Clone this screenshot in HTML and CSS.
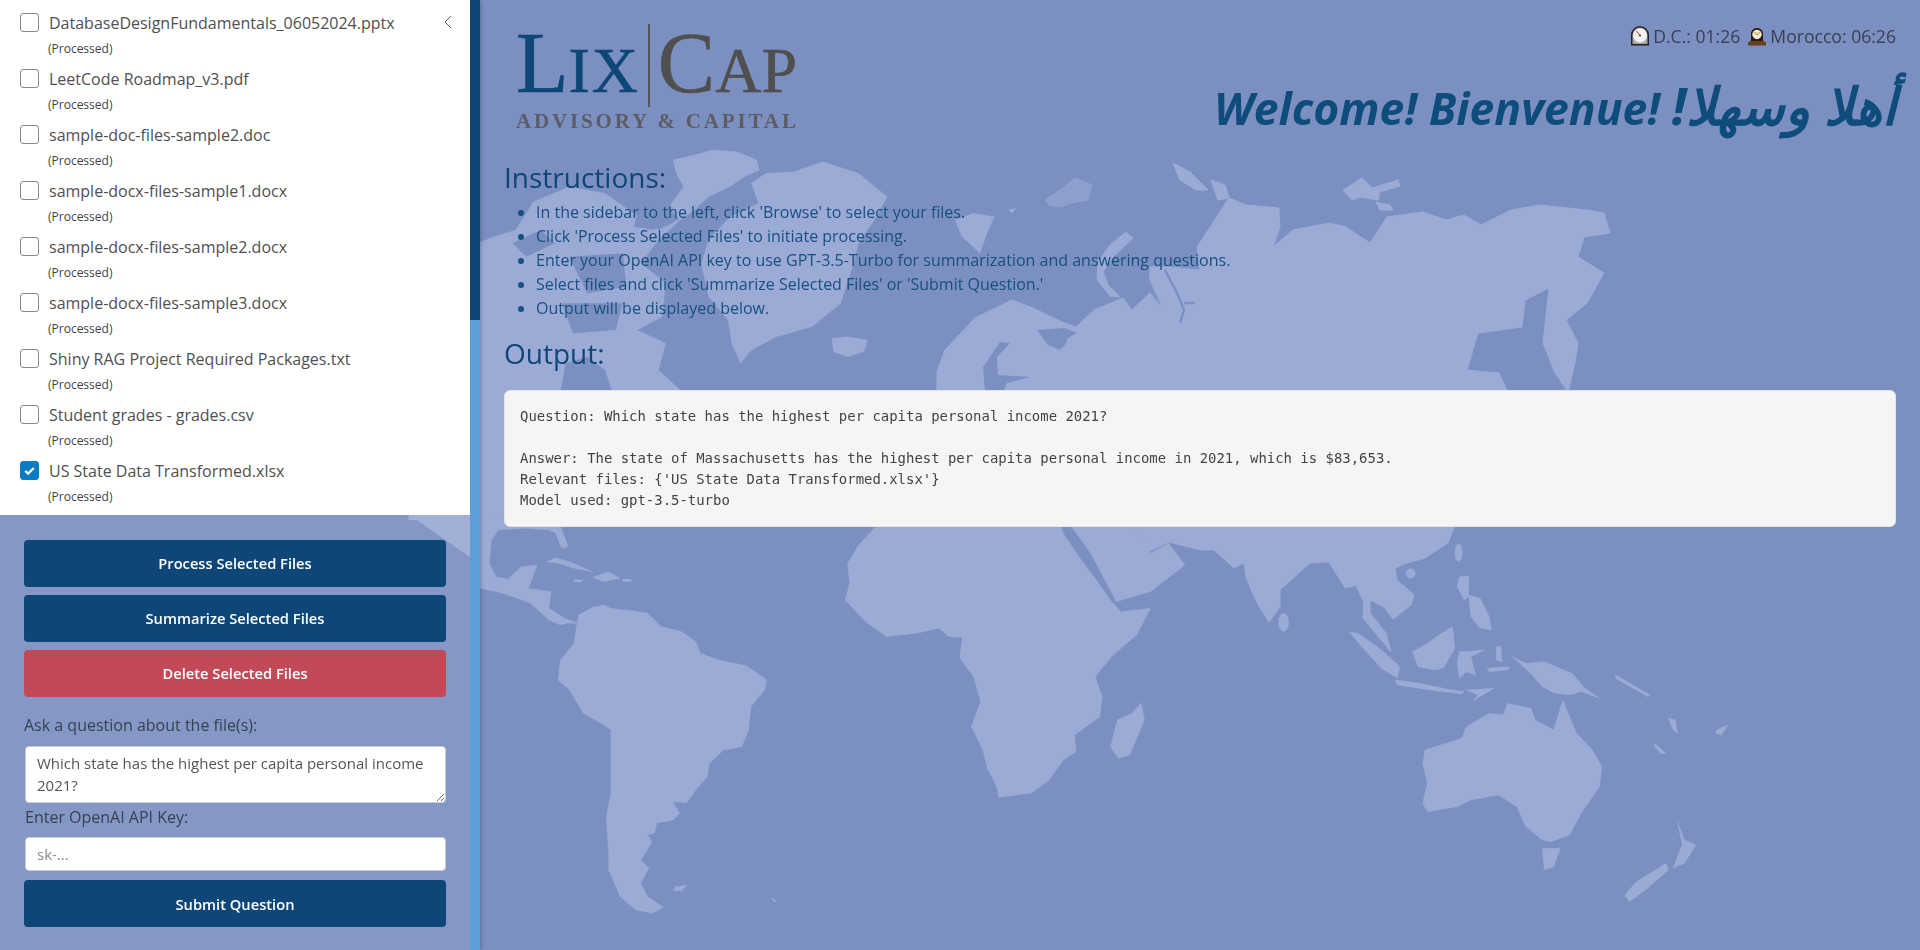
FILE: index.html

```html
<!DOCTYPE html>
<html lang="en">
<head>
    <meta charset="UTF-8">
    <meta name="viewport" content="width=device-width, initial-scale=1.0">
    <title>LixCap Advisory &amp; Capital</title>
    <link rel="stylesheet" href="styles.css">
</head>
<body>

<!-- world map behind the whole page -->
<svg class="world-map" viewBox="0 0 1920 950" aria-hidden="true">
    <g class="land">
        <!-- arctic islands and greenland -->
        <g transform="translate(480 130) scale(.3571 .3333)">
            <path d="M-200 420L40 320L100 300L150 215L250 170L350 190L430 250L500 300L540 280L590 240L500 330L450 400L520 460L510 560L440 600L520 640L500 720L560 780L620 800L620 1170L-200 1170Z"/>
            <path d="M540 90L600 75L650 60L720 65L775 90L782 120L740 140L700 170L640 200L600 240L560 270L530 230L570 170L550 130Z"/>
            <path d="M800 130L880 125L960 95L1060 130L1140 200L1110 260L1060 340L1040 420L1010 520L930 590L830 620L760 660L730 700L705 640L695 570L640 500L620 400L640 330L700 260L780 220L760 160Z"/>
            <path d="M985 625L1030 620L1085 630L1075 665L1030 680L990 665Z"/>
            <path d="M1330 270L1380 250L1440 260L1420 310L1400 370L1350 320Z"/>
            <path d="M1480 240L1500 235L1490 250Z"/>
        </g>
        <!-- eurasia -->
        <path d="M937 392L937 372L945 350L975 318L1012 300L1033 308L1062 322L1076 327L1094 310L1123 298L1132 310L1150 293L1163 309L1150 280L1150 267L1170 267L1200 270L1197 247L1229 198L1246 205L1279 208L1280 227L1273 247L1293 230L1329 223L1346 227L1370 243L1387 217L1423 212L1446 220L1464 215L1481 225L1511 210L1540 205L1587 210L1604 213L1610 233L1584 237L1578 257L1604 273L1587 303L1566 320L1578 343L1575 363L1568 392L1555 373L1543 343L1549 288L1525 300L1522 327L1478 333L1467 370L1499 373L1508 392L1500 400L1457 520L1448 543L1425 558L1407 563L1395 568L1397 580L1414 595L1411 605L1393 619L1384 607L1370 600L1370 613L1386 633L1391 652L1363 618L1364 603L1356 585L1345 588L1342 583L1329 562L1310 563L1280 590L1280 607L1269 622L1257 603L1246 577L1244 563L1234 568L1214 550L1200 550L1169 542L1146 553L1132 530L1100 500L1000 470Z"/>
        <path d="M1126 232L1133 238L1112 258L1103 272L1108 285L1120 297L1110 296L1097 280L1098 262L1110 245Z"/>
        <path d="M1173 163L1190 172L1208 190L1196 190L1180 180Z"/>
        <path d="M1211 180L1225 185L1229 198L1218 200Z"/>
        <path d="M1343 190L1362 178L1372 188L1398 180L1400 186L1380 192L1378 200L1360 197L1352 200Z"/>
        <path d="M1376 202L1390 205L1393 210L1380 210Z"/>
        <path class="faint" d="M1045 200L1060 190L1075 178L1092 185L1088 200L1072 203L1060 207L1050 206Z"/>
        <!-- africa and south america -->
        <g transform="translate(480 520) scale(.4592 .3333)">
            <path d="M-152 -15L170 0L192 80L178 85L165 40L150 30L100 25L40 30L25 60L20 130L35 170L60 178L90 140L125 135L105 205L155 215L150 265L185 295L215 310L190 310L175 315L150 300L110 250L50 220L0 205L-22 111Z"/>
            <path d="M215 285L245 262L270 255L285 265L330 272L365 280L395 320L440 335L470 365L480 400L520 420L580 437L625 480L620 510L590 560L585 630L570 680L530 690L500 730L495 770L470 810L450 848L420 845L435 880L420 900L385 910L380 940L365 945L375 965L360 1000L350 1020L368 1045L350 1090L365 1130L400 1162L375 1180L340 1170L305 1130L280 1050L280 1000L275 890L285 820L285 630L270 615L225 580L195 510L170 480L175 420L205 370L210 320Z"/>
            <path d="M865 15L825 75L800 130L805 190L795 240L840 305L885 350L950 340L1000 325L1020 350L1050 352L1045 415L1075 470L1090 545L1070 620L1095 690L1105 745L1125 800L1130 832L1200 820L1240 780L1270 720L1298 695L1295 645L1350 590L1355 530L1340 470L1375 410L1430 345L1460 265L1395 275L1380 250L1340 175L1305 110L1270 40L1265 15Z"/>
            <path d="M1285 15L1330 100L1385 245L1460 215L1535 135L1500 70L1460 100L1420 15Z"/>
            <path d="M1440 548L1447 600L1415 705L1390 715L1373 680L1388 600L1420 580Z"/>
            <path d="M145 125L165 113L200 128L245 155L205 145L170 130Z"/>
            <path d="M245 172L280 155L305 175L270 185Z"/>
            <path d="M205 178L225 180L220 187L205 185Z"/>
            <path d="M310 178L330 178L328 185L312 184Z"/>
            <path d="M425 1100L450 1096L440 1112L422 1112Z"/>
            <path d="M635 1133L645 1142L640 1146Z"/>
        </g>
        <!-- south east asia and oceania -->
        <g transform="translate(1200 520) scale(.4592 .3333)">
            <ellipse cx="182" cy="307" rx="11" ry="27"/>
            <ellipse cx="459" cy="160" rx="10" ry="14"/>
            <ellipse cx="563" cy="98" rx="8" ry="26"/>
            <path d="M565 170L585 168L585 230L575 240L560 200Z"/>
            <path d="M585 225L610 235L630 290L635 330L610 325L590 290Z"/>
            <path d="M325 335L345 340L400 395L435 440L430 475L395 445L355 385Z"/>
            <path d="M425 480L480 490L530 505L575 515L570 522L500 510L430 495Z"/>
            <path d="M580 510L640 505L610 530L595 542L605 525Z"/>
            <path d="M550 320L555 385L530 445L510 450L475 440L462 395L490 375L520 345Z"/>
            <path d="M565 395L620 390L590 410L600 465L580 455L565 475L560 430Z"/>
            <path d="M625 445L675 440L670 450L630 455Z"/>
            <path d="M645 380L655 378L658 425L645 420Z"/>
            <path d="M680 410L710 430L750 425L810 460L835 500L870 535L830 515L805 525L770 518L745 500L720 460Z"/>
            <path d="M490 690L570 655L580 620L630 580L660 585L670 550L720 565L730 600L770 630L790 540L820 640L855 690L875 740L870 800L830 880L805 945L765 965L745 960L710 920L690 860L650 825L590 840L560 860L495 875L485 850L495 790L485 730Z"/>
            <path d="M745 985L785 985L770 1040L750 1050Z"/>
            <path d="M1040 905L1055 960L1080 975L1055 1030L1030 1045L1050 975Z"/>
            <path d="M1015 1030L1020 1050L970 1110L935 1145L925 1125L950 1085Z"/>
            <path d="M905 465L980 525L975 530L905 475Z"/>
            <path d="M990 670L1015 700L1005 702L990 680Z"/>
            <path d="M1125 630L1150 615L1135 645L1122 640Z"/>
            <path d="M1020 595L1035 600L1040 640L1030 630Z"/>
        </g>
    </g>
    <g class="sea">
        <!-- baltic and white sea -->
        <path d="M1000 342L1010 343L997 357L998 375L1030 377L1007 383L1003 392L985 392L983 367Z"/>
        <path d="M1077 333L1065 328L1037 330L1048 345L1060 350L1065 345L1068 338Z"/>
        <path class="river" d="M1165 270L1177 293L1184 310L1180 323M1184 303L1195 303"/>
        <!-- canadian arctic channels -->
        <g transform="translate(480 130) scale(.3571 .3333)">
            <path d="M250 380L400 370L410 470L300 490Z"/>
            <path d="M230 520L400 520L380 600L260 610Z"/>
            <path d="M450 220L520 230L490 300L430 290Z"/>
            <path d="M225 785L240 700L300 680L350 720L370 785Z"/>
            <path d="M90 340L170 300L210 340L130 380Z"/>
        </g>
        <!-- red sea -->
        <g transform="translate(480 520) scale(.4592 .3333)">
            <path d="M1270 30L1295 60L1340 130L1385 245L1378 250L1340 175L1305 110Z"/>
        </g>
    </g>
</svg>

<div class="layout">
    <aside class="sidebar">
        <div class="sidebar-body">
            <div class="file-panel">
                <div class="file-row">
                    <span class="check"></span>
                    <span class="file-name">DatabaseDesignFundamentals_06052024.pptx</span>
                    <small class="file-status">(Processed)</small>
                </div>
                <div class="file-row">
                    <span class="check"></span>
                    <span class="file-name">LeetCode Roadmap_v3.pdf</span>
                    <small class="file-status">(Processed)</small>
                </div>
                <div class="file-row">
                    <span class="check"></span>
                    <span class="file-name">sample-doc-files-sample2.doc</span>
                    <small class="file-status">(Processed)</small>
                </div>
                <div class="file-row">
                    <span class="check"></span>
                    <span class="file-name">sample-docx-files-sample1.docx</span>
                    <small class="file-status">(Processed)</small>
                </div>
                <div class="file-row">
                    <span class="check"></span>
                    <span class="file-name">sample-docx-files-sample2.docx</span>
                    <small class="file-status">(Processed)</small>
                </div>
                <div class="file-row">
                    <span class="check"></span>
                    <span class="file-name">sample-docx-files-sample3.docx</span>
                    <small class="file-status">(Processed)</small>
                </div>
                <div class="file-row">
                    <span class="check"></span>
                    <span class="file-name">Shiny RAG Project Required Packages.txt</span>
                    <small class="file-status">(Processed)</small>
                </div>
                <div class="file-row">
                    <span class="check"></span>
                    <span class="file-name">Student grades - grades.csv</span>
                    <small class="file-status">(Processed)</small>
                </div>
                <div class="file-row">
                    <span class="check checked">
                        <svg viewBox="0 0 20 20"><path d="M5 10.5l3.4 3.2L15 7" fill="none" stroke="#fff" stroke-width="2.6"/></svg>
                    </span>
                    <span class="file-name">US State Data Transformed.xlsx</span>
                    <small class="file-status">(Processed)</small>
                </div>
                <svg class="collapse-icon" viewBox="0 0 8 14"><path d="M7 1L1 7l6 6" fill="none" stroke="#555" stroke-width="1"/></svg>
            </div>

            <div class="controls">
                <button class="btn">Process Selected Files</button>
                <button class="btn">Summarize Selected Files</button>
                <button class="btn btn-danger">Delete Selected Files</button>

                <label class="ask-label" for="question">Ask a question about the file(s):</label>
                <textarea id="question" class="field question-field">Which state has the highest per capita personal income 2021?</textarea>
                <label class="key-label" for="api-key">Enter OpenAI API Key:</label>
                <input id="api-key" class="field key-field" type="text" placeholder="sk-...">
                <button class="btn btn-submit">Submit Question</button>
            </div>
        </div>
        <div class="scrollbar"><div class="scrollbar-thumb"></div></div>
    </aside>

    <main class="main">
        <header class="page-header">
            <div class="logo">
                <div class="logo-name">
                    <span class="logo-lix"><span class="logo-big">L</span>IX</span>
                    <span class="logo-rule"></span>
                    <span class="logo-cap"><span class="logo-big">C</span>AP</span>
                </div>
                <div class="logo-sub">ADVISORY &amp; CAPITAL</div>
            </div>
            <div class="greeting">
                <div class="clocks">
                    <svg class="clock" viewBox="0 0 20 20">
                        <path d="M1 19.5V9a9 9 0 0 1 18 0v10.5z" fill="#222"/>
                        <path d="M2.5 18V9a7.500 7.500 0 0 1 15 0v9z" fill="#aaa"/>
                        <circle cx="10" cy="9.500" r="7" fill="#f4f4f4"/>
                        <path d="M6 4.500l4 5" stroke="#d33" stroke-width="1"/>
                        <circle cx="10" cy="9.500" r="1" fill="#333"/>
                    </svg>
                    <span class="clock-text">D.C.: 01:26</span>
                    <svg class="clock clock-mantel" viewBox="0 0 20 20">
                        <path d="M1 19.500v-3l3-2V8a6 6 0 0 1 12 0v6.500l3 2v3z" fill="#6b3f1d"/>
                        <path d="M4 15V8a6 6 0 0 1 12 0v7z" fill="#2a1a10"/>
                        <circle cx="10" cy="8.500" r="4.700" fill="#f3ead8"/>
                        <path d="M7.500 6l2.500 3 2.500-3" fill="none" stroke="#b8860b" stroke-width="1"/>
                    </svg>
                    <span class="clock-text">Morocco: 06:26</span>
                </div>
                <h1 class="welcome">Welcome! Bienvenue! <span class="welcome-ar">!أهلا وسهلا</span></h1>
            </div>
        </header>

        <h3 class="section-title">Instructions:</h3>
        <ul class="steps">
            <li>In the sidebar to the left, click 'Browse' to select your files.</li>
            <li>Click 'Process Selected Files' to initiate processing.</li>
            <li>Enter your OpenAI API key to use GPT-3.5-Turbo for summarization and answering questions.</li>
            <li>Select files and click 'Summarize Selected Files' or 'Submit Question.'</li>
            <li>Output will be displayed below.</li>
        </ul>

        <h3 class="section-title output-title">Output:</h3>
        <pre class="output">Question: Which state has the highest per capita personal income 2021?

Answer: The state of Massachusetts has the highest per capita personal income in 2021, which is $83,653.
Relevant files: {'US State Data Transformed.xlsx'}
Model used: gpt-3.5-turbo</pre>
    </main>
</div>

</body>
</html>
```

FILE: styles.css

```css
html, body { margin: 0; padding: 0; height: 100%; overflow: hidden; }
body { background-color: #7b90c1; color: #3a4054; font-family: "Open Sans", "DejaVu Sans", sans-serif; font-size: 16px; line-height: 24px; }

.world-map { position: fixed; top: 0; left: 0; width: 1920px; height: 950px; }
.land { fill: #9babd6; stroke: #9babd6; stroke-width: 1; stroke-linejoin: round; }
.land .faint { opacity: 0.6; }
.sea { fill: #7b90c1; }
.river { fill: none; stroke: #7b90c1; stroke-width: 2.5; }

.layout { position: relative; display: flex; height: 950px; }

/* sidebar */
.sidebar { display: flex; flex: 0 0 480px; background-color: rgba(255, 255, 255, 0.07); box-shadow: 0 0 5px rgba(0, 0, 0, 0.35); }
.sidebar-body { flex: 1; min-width: 0; }
.scrollbar { flex: 0 0 10px; background-color: #5a9fd8; }
.scrollbar-thumb { height: 320px; background-color: #0e4777; }

.file-panel { position: relative; height: 515px; background-color: #fff; }
.file-row { display: grid; grid-template-columns: 19px 1fr; column-gap: 10px; height: 56px; padding: 13px 0 0 20px; box-sizing: border-box; }
.check { width: 19px; height: 19px; box-sizing: border-box; border: 1px solid #8a8a8a; border-radius: 3px; background-color: #fff; }
.check.checked { border-color: #0b7bc4; background-color: #0b7bc4; }
.check svg { display: block; width: 17px; height: 17px; }
.file-name { color: #505050; font-size: 16px; line-height: 20px; white-space: nowrap; }
.file-status { grid-column: 2; margin: 7px 0 0 -1px; color: #444; font-size: 12px; line-height: 18px; }
.collapse-icon { position: absolute; top: 15px; left: 444px; width: 8px; height: 14px; }

.controls { display: flex; flex-direction: column; align-items: flex-start; padding: 25px 24px 0; }
.btn { width: 422px; height: 47px; margin-bottom: 8px; padding: 0 0 2px; border: none; border-radius: 4px; background-color: #0e4777; color: #fff; font-family: inherit; font-size: 14.7px; font-weight: 600; }
.btn-danger { margin-bottom: 0; background-color: #c24a58; }
.btn-submit { margin: 9px 0 0; padding: 0; }
.ask-label { margin-top: 16px; margin-bottom: 9px; }
.key-label { margin: 2px 0 8px 1px; }
.field { width: 421px; margin-left: 1px; box-sizing: border-box; border: 1px solid #ccc; border-radius: 4px; background-color: #fff; color: #555; font-family: inherit; font-size: 15px; }
.question-field { display: block; height: 57px; padding: 5px 11px; line-height: 22px; }
.key-field { height: 34px; padding: 0 11px; }
.key-field::placeholder { color: #888; }

/* main area */
.main { flex: 1; min-width: 0; padding: 0 24px; }
.page-header { display: flex; justify-content: space-between; height: 160px; }
.logo { width: 281px; margin: 24px 0 0 12px; }
.logo-name { display: flex; justify-content: space-between; align-items: flex-end; height: 83px; font-family: "Liberation Serif", serif; font-size: 64px; line-height: 1; -webkit-text-stroke: 0.6px; }
.logo-big { font-size: 86px; letter-spacing: 0; }
.logo-lix { margin-bottom: 1px; color: #0e4777; letter-spacing: 2px; }
.logo-cap { margin-bottom: 1px; color: #4f4f4f; }
.logo-rule { width: 2px; height: 83px; background-color: #555; }
.logo-sub { margin-top: 2px; color: #5c5c66; font-family: "Liberation Serif", serif; font-size: 21px; line-height: 24px; font-weight: bold; letter-spacing: 2.85px; white-space: nowrap; }

.greeting { text-align: right; }
.clocks { display: flex; justify-content: flex-end; align-items: center; height: 24px; margin-top: 24px; font-size: 17.6px; }
.clock { width: 20px; height: 20px; margin-right: 3px; }
.clock-mantel { margin-left: 7px; }
.welcome { margin: 27px 0 0; color: #0e4c7c; font-size: 44.5px; line-height: 60px; font-weight: 700; font-style: italic; white-space: nowrap; }
.welcome-ar { font-size: 52px; }

.section-title { margin: 0; color: #0e4777; font-size: 28px; line-height: 34px; font-weight: 400; }
.steps { margin: 6px 0 0; padding-left: 32px; color: #17507f; }
.output-title { margin-top: 16px; }
.output { margin: 20px 0 0; padding: 15px; border: 1px solid #e3e3e3; border-radius: 6px; background-color: #f5f5f5; color: #444; font-family: "DejaVu Sans Mono", monospace; font-size: 13.95px; line-height: 21px; }
```
